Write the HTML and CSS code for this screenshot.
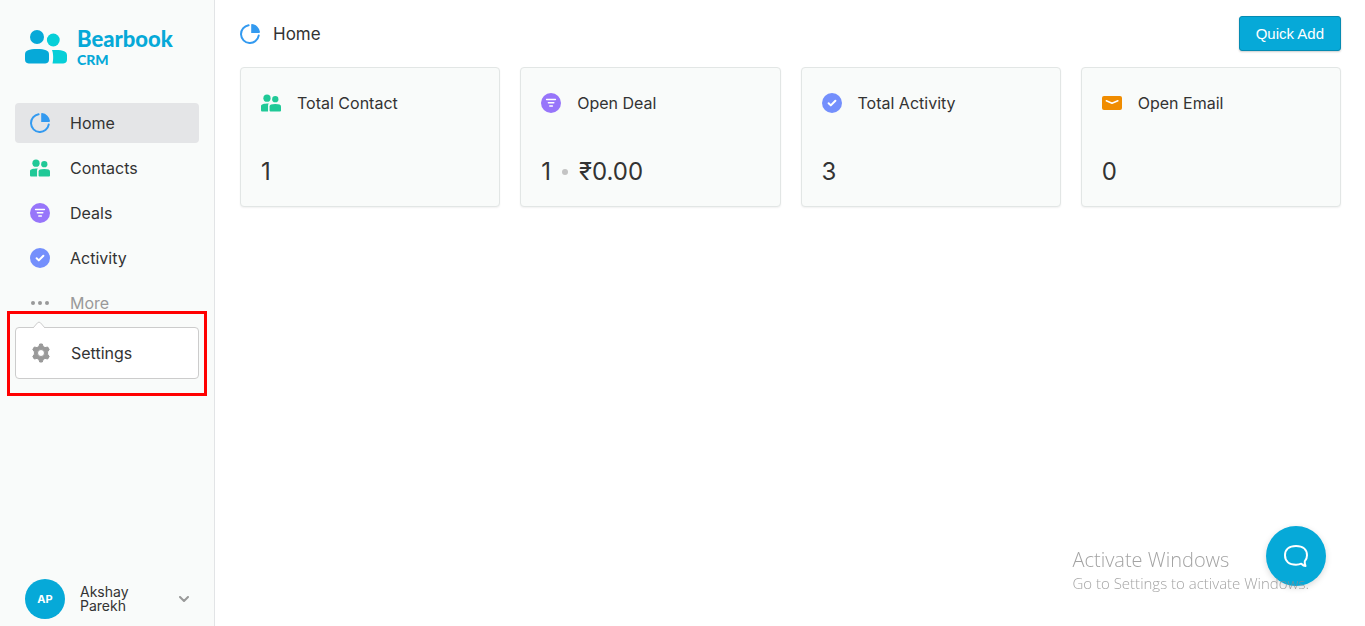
FILE: index.html
```html
<!DOCTYPE html>
<html lang="en">
<head>
  <meta charset="UTF-8" />
  <meta name="viewport" content="width=device-width, initial-scale=1.0" />
  <title>Bearbook CRM</title>
  <link rel="stylesheet" href="styles.css">
</head>
<body>
  <!-- shared icons -->
  <svg class="sprite" aria-hidden="true">
    <symbol id="icon-home" viewBox="0 0 20 20">
      <path d="M8.600 1.300A8.900 8.900 0 1 0 18.700 11.600" fill="none" stroke="#339af0" stroke-width="2" stroke-linecap="round"/>
      <path d="M11.200 0.800c0-.5.3-.8.8-.7a9 9 0 0 1 8 8c0 .5-.3.8-.8.8h-8z" fill="#339af0"/>
    </symbol>
    <symbol id="icon-contacts" viewBox="0 0 21 18">
      <g fill="#20c997">
        <circle cx="6.3" cy="3.9" r="3.8"/>
        <circle cx="15" cy="5" r="3.3"/>
        <path d="M0 12.200C0 10.300 2.500 9.400 8.200 9.400c-.6.6-.8 1.300-.8 2.300V18H1.500C.5 18 0 17.400 0 16.500z"/>
        <path d="M9 12.600C9 10.800 11 10 15 10s6 .8 6 2.600v3.900c0 1-.5 1.500-1.500 1.500h-9C9.500 18 9 17.500 9 16.500z"/>
      </g>
    </symbol>
    <symbol id="icon-deals" viewBox="0 0 20 20">
      <circle cx="10" cy="10" r="10" fill="#9775fa"/>
      <path d="M5.600 6.500h8.800M7.400 9.800h5.400M8.800 13h2.600" stroke="#fff" stroke-width="1.500" stroke-linecap="round"/>
    </symbol>
    <symbol id="icon-activity" viewBox="0 0 20 20">
      <circle cx="10" cy="10" r="10" fill="#748ffc"/>
      <path d="M6.600 10.300l2.200 2.100 4.600-4.700" fill="none" stroke="#fff" stroke-width="2" stroke-linecap="round" stroke-linejoin="round"/>
    </symbol>
    <symbol id="icon-email" viewBox="0 0 20 14">
      <rect width="20" height="14" rx="2" fill="#f08c00"/>
      <path d="M4.300 4.800L10 7.300l5.900-2.500" fill="none" stroke="#fff" stroke-width="1.500" stroke-linecap="round" stroke-linejoin="round"/>
    </symbol>
    <symbol id="icon-more" viewBox="0 0 20 20">
      <g fill="#999">
        <circle cx="3" cy="10" r="2"/>
        <circle cx="10" cy="10" r="2"/>
        <circle cx="17" cy="10" r="2"/>
      </g>
    </symbol>
    <symbol id="icon-settings" viewBox="0 0 20 20">
      <path fill="#999" stroke="#999" stroke-linejoin="round" fill-rule="evenodd" d="M8.700 1h2.600l.8 2.500 1.900 1.100 2.700-.6 1.500 2.500-1.600 2.300v2.400l1.600 2.300-1.500 2.500-2.700-.6-1.900 1.100-.8 2.500H8.700l-.8-2.500L6 15.400l-2.700.6-1.500-2.500 1.600-2.300V8.800L1.800 6.500 3.300 4l2.700.6 1.900-1.100zM10 6.500a3.500 3.500 0 1 0 0 7 3.500 3.500 0 0 0 0-7z"/>
    </symbol>
  </svg>

  <aside class="sidebar">
    <a class="logo" href="#">
      <svg class="logo-mark" viewBox="0 0 42 34" aria-hidden="true">
        <circle cx="12" cy="7" r="7" fill="#06a9d8"/>
        <circle cx="28.300" cy="10" r="6.400" fill="#06cfd8"/>
        <path d="M0 24.500C0 20.300 4 19 12 19s12 1.300 12 5.500V29c0 3.500-1.500 4.500-5 4.500H5c-3.500 0-5-1-5-4.500z" fill="#06a9d8"/>
        <path d="M27 20c10-.5 15 .8 15 5.200V29c0 3.500-1.500 4.500-5 4.500H27.500c1-3.500 1-10-.5-13.500z" fill="#06cfd8"/>
      </svg>
      <span class="logo-text">
        <span class="logo-name">Bearbook</span>
        <span class="logo-sub">CRM</span>
      </span>
    </a>

    <nav class="nav">
      <a class="nav-item active" href="#"><svg class="icon"><use href="#icon-home"/></svg>Home</a>
      <a class="nav-item" href="#"><svg class="icon"><use href="#icon-contacts"/></svg>Contacts</a>
      <a class="nav-item" href="#"><svg class="icon"><use href="#icon-deals"/></svg>Deals</a>
      <a class="nav-item" href="#"><svg class="icon"><use href="#icon-activity"/></svg>Activity</a>
      <button class="nav-item more" type="button" aria-expanded="true"><svg class="icon"><use href="#icon-more"/></svg>More</button>
      <div class="submenu">
        <svg class="submenu-arrow" viewBox="0 0 14 7" aria-hidden="true">
          <path d="M1 7L5.500 1.800q1.500-1.500 3 0L13 7" fill="#fff" stroke="#ccc"/>
        </svg>
        <a class="nav-item" href="#"><svg class="icon"><use href="#icon-settings"/></svg>Settings</a>
        <div class="highlight"></div>
      </div>
    </nav>

    <button class="profile" type="button">
      <span class="avatar">AP</span>
      <span class="profile-name">Akshay Parekh</span>
      <svg class="chevron" viewBox="0 0 10 6" aria-hidden="true">
        <path d="M1 1l4 4 4-4" fill="none" stroke="#999" stroke-width="2" stroke-linecap="round" stroke-linejoin="round"/>
      </svg>
    </button>
  </aside>

  <main class="main">
    <header class="topbar">
      <svg class="icon"><use href="#icon-home"/></svg>
      <h1 class="page-title">Home</h1>
      <button class="quick-add" type="button">Quick Add</button>
    </header>

    <section class="cards">
      <article class="card">
        <h2 class="card-title"><svg class="icon"><use href="#icon-contacts"/></svg>Total Contact</h2>
        <p class="card-value">1</p>
      </article>
      <article class="card">
        <h2 class="card-title"><svg class="icon"><use href="#icon-deals"/></svg>Open Deal</h2>
        <p class="card-value">1<span class="dot"></span>₹0.00</p>
      </article>
      <article class="card">
        <h2 class="card-title"><svg class="icon"><use href="#icon-activity"/></svg>Total Activity</h2>
        <p class="card-value">3</p>
      </article>
      <article class="card">
        <h2 class="card-title"><svg class="icon"><use href="#icon-email"/></svg>Open Email</h2>
        <p class="card-value">0</p>
      </article>
    </section>
  </main>

  <button class="chat" type="button" aria-label="Open chat">
    <svg class="chat-icon" viewBox="0 0 26 24" aria-hidden="true">
      <path d="M21.800 17.200C23.500 15.500 24 13.500 24 11.300 24 5.500 20 2 13 2S2 5.500 2 11.300 6 20.700 13 20.700c2 0 3.800-.3 5.300-1 1.200 1.200 2.700 2.300 4.200 2.300-.8-1.500-1-3-.7-4.800z" fill="none" stroke="#fff" stroke-width="2" stroke-linejoin="round"/>
    </svg>
  </button>

  <div class="watermark">
    <div class="watermark-title">Activate Windows</div>
    <div class="watermark-text">Go to Settings to activate Windows.</div>
  </div>
</body>
</html>
```

FILE: styles.css
```css
* {
  box-sizing: border-box;
}

body {
  margin: 0;
  display: flex;
  min-height: 100vh;
  background: #fff;
  color: #333;
  font-family: Inter, sans-serif;
  font-size: 16px;
}

a {
  color: inherit;
  text-decoration: none;
}

button {
  font: inherit;
  color: inherit;
  cursor: pointer;
}

.sprite {
  position: absolute;
  width: 0;
  height: 0;
}

.icon {
  flex: none;
  width: 20px;
  height: 20px;
}

/* sidebar */
.sidebar {
  flex: none;
  display: flex;
  flex-direction: column;
  width: 215px;
  padding: 27px 15px 7px;
  background: #f9fbfa;
  border-right: 1px solid #e2e4e6;
}

.logo {
  display: flex;
  gap: 10px;
  height: 41px;
  margin: 0 0 35px 10px;
  color: #06a9d8;
}

.logo-mark {
  width: 42px;
  height: 34px;
  margin-top: 3px;
}

.logo-text {
  display: flex;
  flex-direction: column;
  font-family: Lato, sans-serif;
  font-weight: 900;
}

.logo-name {
  font-size: 22px;
  line-height: 24px;
}

.logo-sub {
  font-size: 14px;
  line-height: 18px;
}

.nav {
  display: flex;
  flex-direction: column;
  gap: 5px;
}

.nav-item {
  display: flex;
  align-items: center;
  gap: 20px;
  width: 100%;
  height: 40px;
  padding: 0 15px;
  background: none;
  border: 0;
  border-radius: 4px;
}

.nav-item.active {
  background: #e4e5e7;
}

.nav-item.more {
  color: #999;
}

.submenu {
  position: relative;
  margin-top: -1px;
  padding: 5px 0;
  background: #fff;
  border: 1px solid #ccc;
  border-radius: 4px;
}

.submenu-arrow {
  position: absolute;
  top: -7px;
  left: 16px;
  width: 14px;
  height: 7px;
}

.highlight {
  position: absolute;
  inset: -17px -9px -18px;
  border: 3px solid #f00;
  pointer-events: none;
}

.profile {
  display: flex;
  align-items: center;
  gap: 15px;
  margin-top: auto;
  padding: 0 10px;
  background: none;
  border: 0;
  text-align: left;
}

.avatar {
  flex: none;
  width: 40px;
  height: 40px;
  border-radius: 50%;
  background: #06a9d8;
  color: #fff;
  font-size: 11px;
  font-weight: 700;
  line-height: 40px;
  text-align: center;
}

.profile-name {
  flex: 1;
  padding-right: 30px;
  font-size: 14px;
  line-height: 14px;
}

.chevron {
  flex: none;
  width: 10px;
  height: 6px;
}

/* main */
.main {
  flex: 1;
  min-width: 0;
  padding: 16px 24px 16px 25px;
}

.topbar {
  display: flex;
  align-items: center;
  gap: 13px;
  margin-bottom: 16px;
}

.page-title {
  margin: 0;
  font-size: 17px;
  font-weight: 400;
}

.quick-add {
  height: 35px;
  margin-left: auto;
  padding: 0 16px;
  background: #06a9d8;
  border: 1px solid #058bb2;
  border-radius: 3px;
  box-shadow: 0 1px 2px rgba(0, 0, 0, 0.2);
  color: #fff;
  font-family: "Liberation Sans", Arial, sans-serif;
  font-size: 15px;
}

.cards {
  display: grid;
  grid-template-columns: repeat(4, 1fr);
  gap: 20px;
}

.card {
  padding: 20px;
  background: #f9fbfa;
  border: 1px solid #e2e6e5;
  border-radius: 4px;
  box-shadow: 0 1px 2px rgba(0, 0, 0, 0.06);
}

.card-title {
  display: flex;
  align-items: center;
  gap: 16px;
  height: 30px;
  margin: 0 0 40px;
  font-size: 16px;
  font-weight: 400;
}

.card-value {
  display: flex;
  align-items: center;
  gap: 11px;
  margin: 0;
  font-size: 24px;
  line-height: 28px;
}

.dot {
  width: 6px;
  height: 6px;
  border-radius: 50%;
  background: #c4c4c4;
}

/* floating */
.chat {
  position: fixed;
  right: 39px;
  bottom: 40px;
  display: flex;
  align-items: center;
  justify-content: center;
  width: 60px;
  height: 60px;
  padding: 0;
  border: 0;
  border-radius: 50%;
  background: #06a9d8;
  box-shadow: 0 2px 6px rgba(0, 0, 0, 0.15);
}

.chat-icon {
  width: 26px;
  height: 24px;
}

.watermark {
  position: fixed;
  right: 56px;
  bottom: 33px;
  color: rgba(140, 140, 140, 0.8);
  font-family: "Segoe UI", "Open Sans", sans-serif;
  font-weight: 300;
  pointer-events: none;
}

.watermark-title {
  font-size: 20px;
  line-height: 26px;
}

.watermark-text {
  font-size: 15px;
  line-height: 20px;
}
```
